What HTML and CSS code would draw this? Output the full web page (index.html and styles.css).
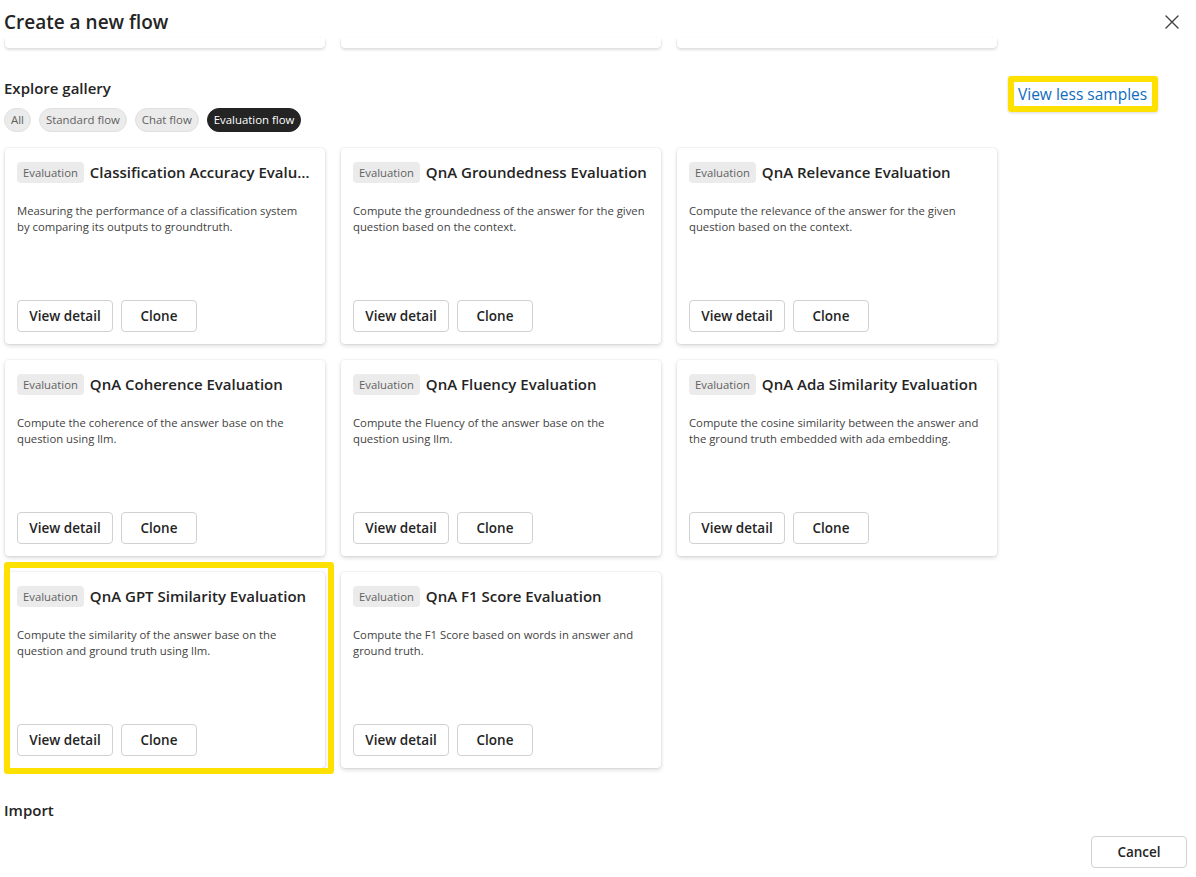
FILE: index.html
```html
<!DOCTYPE html>
<html lang="en">
<head>
<meta charset="utf-8">
<title>Create a new flow</title>
<link rel="stylesheet" href="styles.css">
</head>
<body>
<div class="dialog">
  <header class="dialog-header">
    <h1 class="dialog-title">Create a new flow</h1>
    <button class="close-btn" aria-label="Close">
      <svg width="14" height="14" viewBox="0 0 14 14"><path d="M1 1 L13 13 M13 1 L1 13" stroke="#424242" stroke-width="1.4" stroke-linecap="round" fill="none"/></svg>
    </button>
  </header>

  <div class="stub-row">
    <div class="stub"></div>
    <div class="stub"></div>
    <div class="stub"></div>
  </div>

  <section class="gallery">
    <div class="gallery-main">
      <h2 class="section-title">Explore gallery</h2>
      <div class="pills">
        <span class="pill">All</span>
        <span class="pill">Standard flow</span>
        <span class="pill">Chat flow</span>
        <span class="pill active">Evaluation flow</span>
      </div>
      <div class="grid">
        <div class="card">
          <div class="card-head"><span class="tag">Evaluation</span><span class="card-title">Classification Accuracy Evaluation</span></div>
          <p class="card-desc">Measuring the performance of a classification system by comparing its outputs to groundtruth.</p>
          <div class="card-actions"><button class="btn btn-detail">View detail</button><button class="btn btn-clone">Clone</button></div>
        </div>
        <div class="card">
          <div class="card-head"><span class="tag">Evaluation</span><span class="card-title">QnA Groundedness Evaluation</span></div>
          <p class="card-desc">Compute the groundedness of the answer for the given question based on the context.</p>
          <div class="card-actions"><button class="btn btn-detail">View detail</button><button class="btn btn-clone">Clone</button></div>
        </div>
        <div class="card">
          <div class="card-head"><span class="tag">Evaluation</span><span class="card-title">QnA Relevance Evaluation</span></div>
          <p class="card-desc">Compute the relevance of the answer for the given question based on the context.</p>
          <div class="card-actions"><button class="btn btn-detail">View detail</button><button class="btn btn-clone">Clone</button></div>
        </div>
        <div class="card">
          <div class="card-head"><span class="tag">Evaluation</span><span class="card-title">QnA Coherence Evaluation</span></div>
          <p class="card-desc">Compute the coherence of the answer base on the question using llm.</p>
          <div class="card-actions"><button class="btn btn-detail">View detail</button><button class="btn btn-clone">Clone</button></div>
        </div>
        <div class="card">
          <div class="card-head"><span class="tag">Evaluation</span><span class="card-title">QnA Fluency Evaluation</span></div>
          <p class="card-desc">Compute the Fluency of the answer base on the question using llm.</p>
          <div class="card-actions"><button class="btn btn-detail">View detail</button><button class="btn btn-clone">Clone</button></div>
        </div>
        <div class="card">
          <div class="card-head"><span class="tag">Evaluation</span><span class="card-title">QnA Ada Similarity Evaluation</span></div>
          <p class="card-desc">Compute the cosine similarity between the answer and the ground truth embedded with ada embedding.</p>
          <div class="card-actions"><button class="btn btn-detail">View detail</button><button class="btn btn-clone">Clone</button></div>
        </div>
        <div class="card highlighted">
          <div class="card-head"><span class="tag">Evaluation</span><span class="card-title">QnA GPT Similarity Evaluation</span></div>
          <p class="card-desc">Compute the similarity of the answer base on the question and ground truth using llm.</p>
          <div class="card-actions"><button class="btn btn-detail">View detail</button><button class="btn btn-clone">Clone</button></div>
          <div class="highlight-frame"></div>
        </div>
        <div class="card">
          <div class="card-head"><span class="tag">Evaluation</span><span class="card-title">QnA F1 Score Evaluation</span></div>
          <p class="card-desc">Compute the F1 Score based on words in answer and ground truth.</p>
          <div class="card-actions"><button class="btn btn-detail">View detail</button><button class="btn btn-clone">Clone</button></div>
        </div>
      </div>
    </div>
    <div class="gallery-side">
      <a class="view-less" href="#">View less samples</a>
    </div>
  </section>

  <h2 class="section-title import-title">Import</h2>

  <footer class="dialog-footer">
    <button class="btn btn-cancel">Cancel</button>
  </footer>
</div>
</body>
</html>
```

FILE: styles.css
```css
* { box-sizing: border-box; }

html, body {
  margin: 0;
  padding: 0;
  background: #ffffff;
}

body {
  font-family: "Open Sans", "Noto Sans", "Liberation Sans", sans-serif;
  color: #242424;
  width: 1196px;
  height: 877px;
  overflow: hidden;
}

.dialog {
  padding: 0 9px 0 4px;
}

.dialog-header {
  height: 38px;
  padding-top: 8px;
  display: flex;
  justify-content: space-between;
  align-items: flex-start;
}

.dialog-title {
  margin: 0;
  font-size: 19px;
  font-weight: 600;
  line-height: 28px;
  color: #242424;
}

.close-btn {
  border: none;
  background: transparent;
  padding: 0;
  margin: 7px 8px 0 0;
  width: 14px;
  height: 14px;
  display: flex;
}

.stub-row {
  display: grid;
  grid-template-columns: repeat(3, 320px);
  column-gap: 16px;
  padding-left: 1px;
}

.stub {
  height: 10px;
  background: #fff;
  border-radius: 0 0 4px 4px;
  box-shadow: 0 2px 3px rgba(0, 0, 0, 0.13), 1px 0 1px rgba(0,0,0,0.04), -1px 0 1px rgba(0,0,0,0.04);
}

.gallery {
  margin-top: 29px;
  display: flex;
  gap: 11px;
  align-items: flex-start;
}

.gallery-main {
  width: 993px;
}

.section-title {
  margin: 0;
  font-size: 15px;
  font-weight: 600;
  line-height: 22px;
  color: #242424;
}

.pills {
  margin-top: 9px;
  display: flex;
  gap: 8px;
}

.pill {
  height: 24px;
  line-height: 22px;
  padding: 0 6px;
  border-radius: 12px;
  background: #ebebeb;
  border: 1px solid #e0e0e0;
  font-size: 11.4px;
  color: #616161;
}

.pill.active {
  background: #242424;
  border-color: #242424;
  color: #ffffff;
}

.grid {
  margin-top: 16px;
  margin-left: 1px;
  display: grid;
  grid-template-columns: repeat(3, 320px);
  grid-auto-rows: 196px;
  gap: 16px;
}

.card {
  position: relative;
  background: #fff;
  border-radius: 4px;
  box-shadow: 0 0 2px rgba(0, 0, 0, 0.12), 0 2px 4px rgba(0, 0, 0, 0.14);
  padding: 13px 12px 12px;
  display: flex;
  flex-direction: column;
}

.card-head {
  display: flex;
  align-items: center;
  gap: 6px;
  height: 22px;
}

.tag {
  flex: none;
  height: 21px;
  line-height: 21px;
  padding: 0 6px;
  border-radius: 4px;
  background: #ebebeb;
  font-size: 11.3px;
  color: #616161;
}

.card-title {
  flex: 1;
  min-width: 0;
  font-size: 15px;
  font-weight: 600;
  line-height: 22px;
  white-space: nowrap;
  overflow: hidden;
  text-overflow: ellipsis;
  color: #242424;
}

.card-desc {
  margin: 20px 0 0;
  padding-right: 2px;
  font-size: 11.3px;
  line-height: 16px;
  color: #424242;
}

.card-actions {
  margin-top: auto;
  display: flex;
  gap: 8px;
}

.btn {
  height: 32px;
  border: 1px solid #d1d1d1;
  border-radius: 4px;
  background: #fff;
  font-family: inherit;
  font-size: 13.5px;
  font-weight: 600;
  color: #242424;
  padding: 0;
}

.btn-detail { width: 96px; }
.btn-clone { width: 76px; }

.highlight-frame {
  position: absolute;
  left: -1px;
  top: -10px;
  right: -9px;
  bottom: -6px;
  border: 6px solid #ffe100;
  border-radius: 3px;
  pointer-events: none;
}

.gallery-side {
  margin-top: -1px;
}

.view-less {
  display: inline-block;
  border: 6px solid #ffe100;
  border-radius: 3px;
  padding: 0 5px 0 4px;
  line-height: 24px;
  font-size: 15.5px;
  color: #0f6cbd;
  text-decoration: none;
  box-shadow: 0 1px 3px rgba(0, 0, 0, 0.15);
}

.import-title {
  margin-top: 31px;
}

.dialog-footer {
  margin-top: 15px;
  display: flex;
  justify-content: flex-end;
}

.btn-cancel {
  width: 96px;
}
```
